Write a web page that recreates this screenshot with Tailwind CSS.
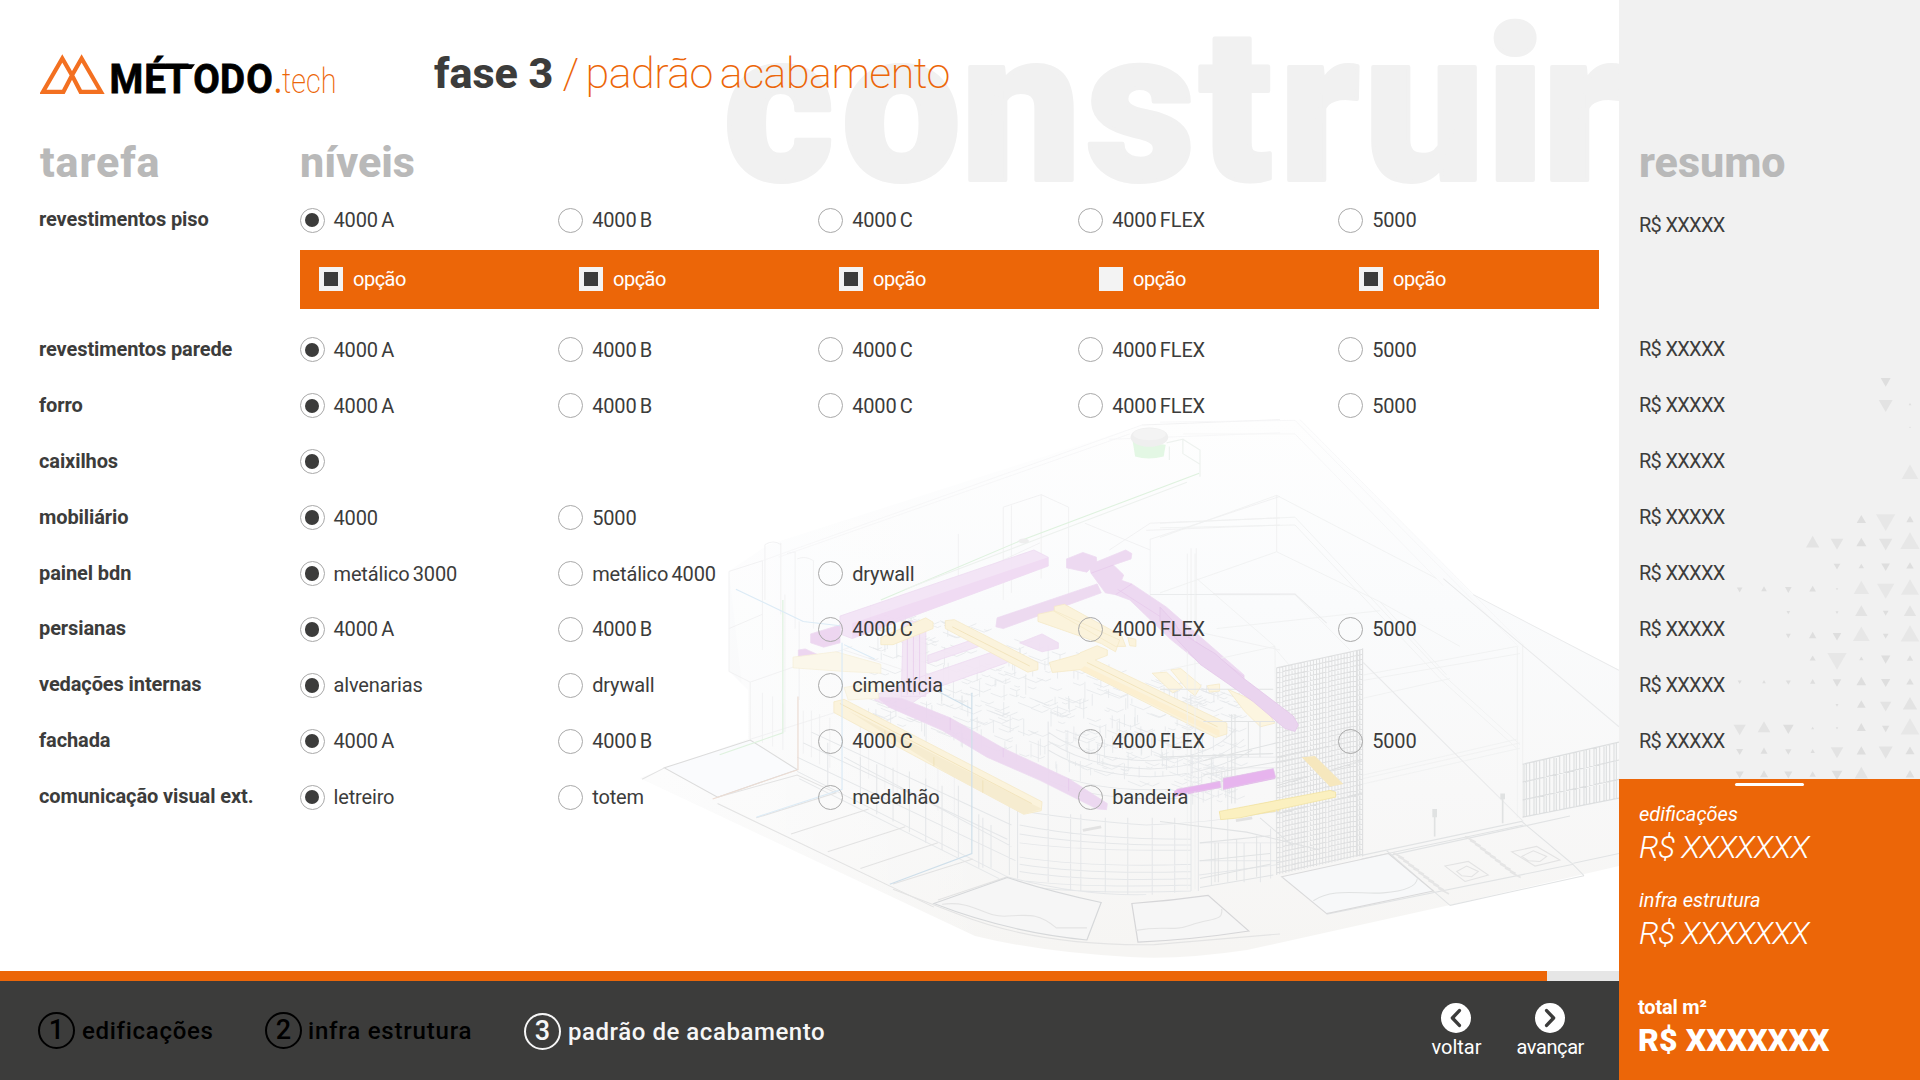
<!DOCTYPE html>
<html lang="pt-BR">
<head>
<meta charset="utf-8">
<title>Método.tech</title>
<script src="https://cdn.jsdelivr.net/npm/@tailwindcss/browser@4"></script>
</head>
<body class="bg-white">
<div class="relative flex h-[1080px] w-[1920px] overflow-hidden bg-white font-[Roboto,sans-serif] text-[20px] leading-none text-[#3c3c3b]">

  <main class="relative isolate flex w-[1619px] shrink-0 flex-col overflow-hidden">
    <!-- backdrop: section word and building model -->
    <svg class="absolute inset-0 -z-10" width="1619" height="1080" viewBox="0 0 1619 1080" fill="none">
      <defs>
        <linearGradient id="site" x1="0" y1="420" x2="0" y2="950" gradientUnits="userSpaceOnUse">
          <stop offset="0" stop-color="#fefefe"/><stop offset=".35" stop-color="#fafbfc"/><stop offset=".7" stop-color="#f8f8f8"/><stop offset="1" stop-color="#f6f5f3"/>
        </linearGradient>
        <linearGradient id="left" x1="640" y1="0" x2="1000" y2="0" gradientUnits="userSpaceOnUse">
          <stop offset="0" stop-color="#fff" stop-opacity=".6"/><stop offset="1" stop-color="#fff" stop-opacity="0"/>
        </linearGradient>
      </defs>
      <text y="179.5" font-size="213" font-weight="900" fill="#f1f1f1" stroke="#f1f1f1" stroke-width="4" stroke-linejoin="round" x="723.5 841.5 961 1086 1199 1279 1364 1486 1542">construir</text>

      <path fill="url(#site)" d="M729 571L768 545 1142 425 1300 420 1473 595 1619 670V866L1450 905 1247 950Q1180 960 1130 957 1040 952 975 936L640 778 748 739V690L729 671Z"/>
      <path fill="url(#left)" d="M729 571L768 545 1142 425V957Q1040 952 975 936L640 778 748 739Z"/>

      <g transform="translate(640 400) scale(.40816 .35714)">
        <g stroke="#eff0f1" stroke-width="2.2">
          <path d="M218 480V760L270 790V950M218 480L300 450 M1230 70L1568 55M300 450V700M218 640L300 600M306 405V560M345 400V600M306 405Q327 390 345 405M360 430L380 425V640M385 445Q405 435 425 450V640M270 790L520 690M890 300V560M910 295V540M983 265V500M1050 300V560M890 300L983 265 1050 300M780 375V520M530 640L980 400M1090 345L1250 420M1250 390V620L1568 700M1250 390L1568 270M1150 420L1250 345 1568 330M1568 350L1240 365M1350 415V640M1363 415V640"/>
          <path stroke="#f6f6f7" d="M300 450L1230 70M340 440L1200 95M1150 110L1568 92"/>
          <path d="M355 545V930M390 620V840M270 950L520 860M300 960V820M325 970V830M350 980V850M400 990V870M420 1000V870M440 1020V880M465 1030V890M500 700L760 800M540 1050V900M560 1060V910M600 1090V920M630 1100V930M700 1120V960M730 1150V1000M770 1170V1020"/>
        </g>
        <g stroke="#e5e7e9" stroke-width="2.6">
          <path d="M1250 545H1568"/>
          <path d="M385 1040L900 1335Q1080 1390 1240 1385M390 1060L880 1340M385 1000L920 1290M400 960L900 1230M420 930L910 1190M500 1000L910 1250M930 1150Q1100 1180 1240 1190 1400 1185 1568 1150M930 1190Q1100 1230 1350 1230M930 1215Q1100 1248 1350 1246M930 1240Q1100 1265 1350 1260M930 1280Q1100 1310 1350 1300M930 1300Q1100 1330 1350 1320M930 1320Q1100 1350 1350 1340M930 1345Q1100 1368 1350 1358M930 1360Q1100 1385 1350 1375M1000 930Q1100 1010 1250 1010 1400 1005 1460 920M1000 955Q1100 1030 1250 1033 1400 1028 1480 950M1000 980Q1100 1050 1250 1055 1400 1050 1500 980M1000 1040Q1120 1100 1300 1090M1000 1065Q1120 1125 1320 1115M1000 900V1350M905 1130V1330M925 1130V1340M1055 1160V1370M1080 1160V1375M1140 1170V1380M1195 1170V1385M1255 1170V1385M1310 1170V1380M1350 950V1375M1368 950V1375M1400 1000V1360M1440 1000V1350M1480 1240V1350M1520 1240V1350M1545 1200V1340M1370 1240H1568M1370 1290H1568M1370 1330L1568 1300M1380 1000H1568M1380 1030H1568M1400 1070L1568 1060"/>
          <path d="M830 1160V1310M840 1170V1310M860 1190V1310M780 1080V1280M740 1080V1260M700 1060V1240M660 1040V1210M620 1030V1180M580 1020V1160M540 1000V1130M460 960V1080"/>
        </g>
        <g id="clutter" stroke="#e5e7ea" stroke-width="2"></g>

        <g stroke="#e3e3e3" stroke-width="3">
          <path fill="#fafbfd" stroke="#dcdcdc" d="M60 1030L270 952 385 1035 190 1112Z"/>
          <path d="M5 1062L60 1030M190 1112L385 1050 480 1100 285 1170M370 1215L560 1145M460 1265L650 1195M540 1312L730 1240M620 1355L815 1285M730 1400L900 1335M190 1130L720 1420"/>
          <path fill="#f6f6f6" stroke="#d6d8da" d="M720 1410L900 1337Q1000 1375 1130 1407L1095 1512Q900 1490 720 1410Z"/>
          <path fill="#f6f6f6" stroke="#d6d6d8" d="M1205 1410Q1300 1402 1392 1387L1492 1487Q1350 1512 1220 1518Z"/>
          <path stroke="#e4e4e4" d="M740 1412C820 1400 840 1450 900 1445S980 1440 1020 1478H1095M1215 1485C1290 1470 1300 1490 1350 1470 1400 1450 1430 1460 1425 1425M620 1370L780 1440Q980 1530 1260 1525L1568 1495"/>
        </g>

        <g fill="#f3e4f6" stroke="#ecd8f0" stroke-width="2" opacity=".92">
          <path d="M490 605L965 420 1000 440V465L520 668 490 655Z"/>
          <path fill="#f0d9f3" stroke="none" d="M520 625L1000 440V465L520 668Z"/>
          <path fill="#ecd3f0" d="M418 655L490 630V680L450 692 418 680ZM388 700L405 697 445 718V738L425 740 388 720Z"/>
          <path d="M645 620H700V830H640ZM705 715L830 665V690L705 738ZM700 770L890 695 900 735 740 800 690 830 640 870 575 840 580 825Z" fill="#f3e6f5"/>
          <path fill="#ecd8f0" d="M875 610L1120 515 1130 540 890 640 872 635Z"/>
          <path fill="#ecd7f1" d="M1045 445L1085 427 1118 440 1120 462 1105 470 1095 482 1045 470ZM1100 462L1190 420 1205 430 1203 445 1160 462 1185 490 1180 505 1205 515 1290 580 1480 770V790L1568 860V895L1500 840 1440 780 1370 735 1300 670 1200 560 1165 545 1140 540 1105 485Z"/>
          <path fill="#ecd6f0" d="M580 832L640 835 760 890 890 975 1050 1060 1145 1130 1143 1147 1120 1145 980 1065 850 1000 740 925 610 860Z"/>
          <path fill="#f0dff3" d="M930 680L985 655 1025 680V695L985 705Z"/>
          <path fill="#e9b9f0" stroke="#e2b2ea" d="M1310 1095L1420 1068V1085L1310 1110ZM1430 1060L1550 1035 1555 1060 1430 1090Z"/>
        </g>
        <g stroke="#e4c5ea" stroke-width="1.6"><path d="M655 630V825M670 625V825M685 640V825M1170 530L1300 625 1480 775M1370 735V700M760 890V925M890 975V1000M1050 1060V1095M1165 545L1205 515M1105 485L1160 462"/></g>
        <g fill="#fbf3dc" stroke="#f5e9c6" stroke-width="2">
          <path d="M590 665L700 610 718 622V640L620 685H590ZM748 618L770 615 975 735V755L950 762 748 640Z"/>
          <path d="M975 600L1015 590 1175 672 1165 705 1130 682 975 620ZM1015 578L1040 572 1180 660 1190 690 1165 690 1015 592ZM1195 665L1215 670V690L1200 688Z"/>
          <path d="M1003 735L1075 712 1078 708 1120 688 1145 700V715L1115 728 1438 905V935L1410 945 1078 755 1010 763Z"/>
          <path fill="#fcefd0" stroke="none" d="M1090 745L1420 925V943L1078 755Z"/>
          <path d="M475 845L500 838 985 1125 983 1150 940 1160 760 1050 475 875Z"/>
          <path fill="#fbf7ea" stroke="#f6efd9" d="M375 720L480 705 590 740V765L500 760 375 750ZM500 805L580 790 585 835 510 840Z"/>
          <path fill="#f6ecd0" stroke="none" d="M510 870L985 1145 940 1160 760 1050Z"/>
          <path fill="#fcf5e0" d="M1255 765L1290 762 1330 805 1305 820ZM1300 755L1325 752 1375 800 1360 828 1340 810ZM1390 800L1420 795V815L1395 818ZM1440 810L1530 855 1555 905 1520 915 1480 870Z"/>
          <path fill="#fbf0c2" stroke="#f3e3a4" d="M1420 1155L1568 1120V1150L1430 1172Z"/>
          <path stroke="#efe0b4" fill="none" d="M490 850L960 1130M600 925V950M720 1000V1025M840 1065V1100M765 635L955 745M1095 735L1415 915"/>
        </g>
        <g stroke-width="3">
          <path stroke="#dff2df" d="M195 993L350 932V560M590 560L930 395 1370 205"/>
          <path stroke="#dcebf6" d="M235 530L400 620 490 632M495 680V1090L285 1168M500 685L575 725"/>
          <path stroke="#cfdfea" d="M813 820V1270L612 1356M720 810L813 865"/>
          <path stroke="#ecdcd3" d="M387 830V1035L178 1117"/>
          <path stroke="#eef2ef" d="M650 530L1340 230M1290 120L1330 110V150L1372 180M1330 110L1372 140V215M1297 130V168"/>
        </g>
        <path fill="#e3f7e4" d="M1207 115L1288 125 1283 158Q1245 170 1213 158Z"/>
        <ellipse cx="1248" cy="104" rx="46" ry="27" fill="#efefef"/>
        <ellipse cx="1248" cy="96" rx="40" ry="17" fill="#f4f4f4"/>
        <ellipse cx="940" cy="395" rx="13" ry="7" fill="#eee"/>
        <path d="M1085 1205L1130 1195M1460 1178L1500 1170" stroke="#e2e2e2" stroke-width="8"/>
      </g>

      <g transform="translate(1160 400) scale(.33333 .35714)">
        <g stroke="#eff0f1" stroke-width="2.4">
          <path stroke="#f5f5f6" d="M420 55L1090 685M0 62L405 57 1075 690M70 95H405L850 520"/>
          <path d="M0 385L350 267 830 500M350 267V425M0 540L350 425 660 565 900 690M0 345L405 328 850 770 1080 965M0 358L405 350 840 780 1070 975M660 565L860 770M610 770L1070 690M610 785L1080 710M610 835L870 780M610 1060L1080 960M610 1075L1080 975M610 1050L1070 950M82 430V1370M105 430V1370M110 500L345 690 350 1330M160 545H405L570 700M170 640L660 590M340 690L440 800M0 760L345 690"/>
          <path d="M1072 690V1170M1088 685V1170"/>
        </g>
        <g stroke="#e1e3e4" stroke-width="3">
          <path stroke="#e9eaeb" d="M610 735L1090 1180M850 500L1377 915M940 545L1377 757M160 543H405L500 625"/>
          <path d="M605 1275L1085 1180 1235 1297M605 1285L1090 1190"/>
          <path d="M690 1275L1230 1165M500 1440L1240 1300M520 1425L820 1372M870 1415L1272 1332M1240 1297L1377 1270M1235 1297L1272 1332M680 1262L870 1415"/>
          <path d="M0 810H340M0 1000L340 990M130 1010L350 960M130 1050L430 1000M130 900H345M215 880V1130M225 880V1130M265 900V1000M300 900V1000M120 1240L330 1220M120 1290L330 1270M120 1340L330 1300M120 1365L340 1330M165 1240V1350M175 1240V1350M230 1230V1345M290 1220V1335M0 1180L260 1210 480 1260M300 1170L400 1250"/>
        </g>
        <g id="tower" stroke="#dfe0e1" stroke-width="3"></g>
        <g id="fence" stroke="#dddfe0" stroke-width="3.4"></g>
        <path fill="#f7f8f9" stroke="#dadadb" stroke-width="3" d="M365 1335L685 1270 820 1375 500 1438Z"/>
        <path stroke="#e0e2e2" stroke-width="3" d="M460 1402C520 1365 600 1385 670 1380 740 1375 770 1360 772 1340"/>
        <g id="crossings" stroke="#e5e5e5"></g>
        <path stroke="#e3e3e3" stroke-width="3" d="M855 1305L925 1292 985 1330 915 1348ZM890 1320L920 1305 955 1320 935 1335 905 1332ZM1055 1265L1130 1250 1200 1288 1125 1305ZM1085 1278L1120 1262 1160 1278 1140 1292 1105 1290Z"/>
        <g stroke="#e0e2e2" stroke-width="5"><path d="M824 1160V1222M1028 1115V1185"/><path stroke-width="14" d="M824 1145V1168M1028 1102V1118"/></g>
        <g fill="#ead4ef" stroke="#e2c4e8" stroke-width="2">
          <path d="M0 580L45 625 60 650 120 685 165 710 245 775 400 885 415 910 405 928 375 920 280 845 205 795 120 740 0 620Z"/>
          <path fill="#e7b4ee" d="M190 1060L340 1032 347 1057 190 1090ZM50 1090L180 1068 183 1085 55 1103Z"/>
        </g>
        <g fill="#fbf0c0" stroke="#f1e09c" stroke-width="2">
          <path d="M178 1152L510 1093 527 1098V1112L240 1170 182 1175Z"/>
          <path fill="#f6e7bd" stroke="none" d="M425 1000L465 997 550 1075 510 1083Z"/>
        </g>
      </g>
    </svg>

    <header class="flex h-[130px] items-center pl-[40px] pt-[17px]">
      <svg class="-mt-[17px] shrink-0" width="394" height="130" viewBox="40 0 394 130" fill="none">
        <path d="M43 91.8L62.3 58.5 72 75.3 81.6 58.5 101 91.8H80.6L72 75.3 63.4 91.8Z" stroke="#f37021" stroke-width="4.2" stroke-miterlimit="8"/>
        <path d="M154 64.3H195L191.5 69H154Z" fill="#000"/>
        <text transform="scale(.94 1)" y="93.5" x="116.5 153.5 175.5 205.5 234 262" font-size="41" font-weight="700" fill="#000" stroke="#000" stroke-width=".8">MÉTODO</text>
        <text x="274" y="93" font-size="35" font-weight="200" fill="#ec6608" textLength="62.5" lengthAdjust="spacingAndGlyphs"><tspan font-weight="500">.</tspan>tech</text>
      </svg>
      <h1 class="flex whitespace-pre text-[43px]"><span class="w-[128.5px] font-extrabold tracking-[0px]">fase 3</span><span class="font-extralight tracking-[-0.5px] [word-spacing:-3px] text-[#ec6608]">/ padrão acabamento</span></h1>
    </header>

    <div class="flex h-[65px] items-center pl-[40px] text-[43px] font-extrabold text-[#b9b9b9]">
      <h2 class="w-[260px] tracking-[0.9px]">tarefa</h2>
      <h2>níveis</h2>
    </div>

    <section id="tasks"></section>

    <div class="mt-auto h-[10px] bg-[#e6e6e6]"><div class="h-full w-[1547px] bg-[#ec6608]"></div></div>
    <footer class="flex h-[99px] items-center bg-[#3c3c3b] text-[24px] font-medium">
      <nav class="flex grow text-black">
        <a class="flex w-[227px] items-center gap-[7px] pl-[38px] tracking-[0.7px]"><span class="flex size-[37px] items-center justify-center rounded-full border-2 border-black text-[27px] tracking-normal">1</span>edificações</a>
        <a class="flex w-[259px] items-center gap-[6px] pl-[38px] tracking-[0.8px]"><span class="flex size-[37px] items-center justify-center rounded-full border-2 border-black text-[27px] tracking-normal">2</span>infra estrutura</a>
        <a class="flex items-center gap-[7px] whitespace-nowrap pl-[38px] pt-[2px] tracking-[0.55px] text-[#f6f6f6]"><span class="flex size-[37px] items-center justify-center rounded-full border-2 border-[#f6f6f6] text-[27px] tracking-normal">3</span>padrão de acabamento</a>
      </nav>
      <div class="flex gap-[35px] pb-[1px] pr-[35px] text-[20px] font-normal text-white">
        <button class="flex flex-col items-center gap-[4px]">
          <svg width="30" height="30" viewBox="0 0 30 30"><circle cx="15" cy="15" r="15" fill="#fff"/><path d="M18.4 7.6L11.4 15l7 7.4" fill="none" stroke="#3c3c3b" stroke-width="3.4" stroke-linecap="round" stroke-linejoin="round"/></svg>voltar</button>
        <button class="flex flex-col items-center gap-[4px] tracking-[-0.4px]">
          <svg width="30" height="30" viewBox="0 0 30 30"><circle cx="15" cy="15" r="15" fill="#fff"/><path d="M11.6 7.6l7 7.4-7 7.4" fill="none" stroke="#3c3c3b" stroke-width="3.4" stroke-linecap="round" stroke-linejoin="round"/></svg>avançar</button>
      </div>
    </footer>
  </main>

  <aside class="relative isolate flex w-[301px] flex-col overflow-hidden bg-[#f1f1f1] pt-[130px]">
    <svg id="triangles" class="absolute left-0 top-0 -z-10" width="301" height="780" viewBox="0 0 301 780"></svg>
    <h2 class="flex h-[65px] items-center pl-[20px] text-[43px] font-extrabold text-[#b9b9b9]">resumo</h2>
    <div id="prices" class="tracking-[-0.7px]"></div>
    <div class="absolute inset-x-0 bottom-0 h-[301px] bg-[#ec6608] pl-[20px] pt-[21px] text-white">
      <div class="absolute left-[116px] top-[4px] h-[2.5px] w-[69px] rounded-full bg-white"></div>
      <p class="text-[20px] italic leading-[28px]">edificações</p>
      <p class="mb-[18px] text-[32px] font-light italic leading-[39px] pb-px tracking-[-0.8px]">R$ XXXXXXX</p>
      <p class="text-[20px] italic leading-[28px]">infra estrutura</p>
      <p class="mb-[39px] text-[32px] font-light italic leading-[39px] pb-px tracking-[-0.8px]">R$ XXXXXXX</p>
      <p class="-ml-px text-[20px] font-bold leading-[28px] tracking-[-0.2px]">total m²</p>
      <p class="-ml-px text-[32px] font-black leading-[38px] tracking-[0.1px]">R$ XXXXXXX</p>
    </div>
  </aside>
</div>

<script>
const levels = ['4000 A', '4000 B', '4000 C', '4000 FLEX', '5000'];
const tasks = [
  ['revestimentos piso', levels],
  ['revestimentos parede', levels],
  ['forro', levels],
  ['caixilhos', ['']],
  ['mobiliário', ['4000', '5000']],
  ['painel bdn', ['metálico 3000', 'metálico 4000', 'drywall']],
  ['persianas', levels],
  ['vedações internas', ['alvenarias', 'drywall', 'cimentícia']],
  ['fachada', levels],
  ['comunicação visual ext.', ['letreiro', 'totem', 'medalhão', 'bandeira']],
];
const radio = (label, on) => `<label class="flex items-center gap-[9px] whitespace-nowrap tracking-[-0.15px] [word-spacing:-1.5px]"><span class="flex size-[25px] shrink-0 items-center justify-center rounded-full border border-[#a9a9a9]">${on ? '<i class="size-[14.5px] rounded-full bg-[#3c3c3b]"></i>' : ''}</span>${label}</label>`;
const row = ([name, opts], height) => `<div class="grid grid-cols-[260.5px_258.7px_260px_260px_260px_1fr] items-center pl-[39px] ${height}"><b class="-mt-[2px] whitespace-nowrap font-bold tracking-[-0.1px]">${name}</b>${opts.map((o, i) => radio(o, i === 0)).join('')}</div>`;
const option = on => `<label class="flex items-center gap-[10px] tracking-[-0.5px]"><span class="flex size-[24px] items-center justify-center bg-[#f3f3f3]">${on ? '<i class="size-[14px] bg-[#3c3c3b]"></i>' : ''}</span><span class="pb-px">opção</span></label>`;
document.getElementById('tasks').innerHTML =
  row(tasks[0], 'h-[50px]') +
  `<div class="mt-[5px] mb-[13px] ml-[300px] grid h-[59px] w-[1299px] grid-cols-[260px_260px_260px_260px_1fr] items-center bg-[#ec6608] pb-px pl-[19px] text-white">${[1, 1, 1, 0, 1].map(option).join('')}</div>` +
  tasks.slice(1).map(t => row(t, 'h-[55.9px]')).join('');

const price = h => `<p class="flex items-center pl-[20px] ${h}">R$ XXXXX</p>`;
document.getElementById('prices').innerHTML = price('h-[60px] mb-[66.5px]') + price('h-[55.9px]').repeat(8);

/* triangle pattern: [column, centre y, width]; odd columns point up */
const tri = [[6,67,30],[6,138,42],[7,132,8],[7,202,5],[7,335,50],[5,477,28],[6,488,58],[7,477,22],[3,545,40],[4,553,38],[5,546,30],[6,554,40],[7,542,58],[4,620,20],[5,618,16],[6,622,26],[7,616,22],[0,690,17],[1,686,17],[2,690,20],[3,686,20],[4,688,7],[5,682,46],[6,694,52],[7,681,54],[2,758,11],[4,758,9],[5,752,37],[6,760,17],[7,752,37],[2,828,15],[3,825,22],[4,830,26],[5,821,50],[6,829,17],[7,820,56],[3,894,18],[4,904,58],[5,895,13],[6,899,28],[7,894,19],[0,967,12],[1,965,11],[2,968,15],[3,964,16],[4,969,26],[5,963,29],[6,969,28],[7,964,22],[4,1036,9],[5,1032,26],[6,1040,34],[7,1030,43],[0,1110,37],[1,1100,38],[2,1108,32],[3,1104,9],[4,1105,8],[5,1101,27],[6,1107,22],[7,1099,56],[0,1176,21],[1,1172,21],[2,1176,19],[3,1173,13],[4,1178,38],[5,1171,28],[6,1178,42],[7,1171,27],[0,1245,24],[1,1241,24],[2,1245,24],[3,1242,19],[4,1246,32],[5,1238,40],[7,1241,26]];
document.getElementById('triangles').innerHTML = tri.map(([c, y, w]) => {
  const x = 1 + (359 + c * 73) / 3, cy = 360 + y / 3, r = w / 6, h = w * .145 * (c % 2 ? 1 : -1);
  return `<path fill="${w > 44 ? '#e7e7e7' : w > 32 ? '#e3e3e3' : '#dedede'}" d="M${x - r} ${cy + h}H${x + r}L${x} ${cy - h}Z"/>`;
}).join('');

/* curtain-wall lattice of the tower */
let d = '';
for (let x = 350; x <= 608; x += 9.2) { const t = (x - 350) / 258; d += `M${x} ${750 - t * 52}V${1330 - t * 55}`; }
for (let k = 0; k < 42; k++) d += `M350 ${750 + k * 14}L608 ${698 + k * 14}`;
d += 'M600 698V1278M608 695V1278M592 700V1278M350 1000L608 950M350 1080L608 1010M350 1160L608 1100';
document.getElementById('tower').innerHTML = `<path d="${d}"/>`;

/* slatted fence at the back of the lot */
d = 'M1088 1020L1377 958M1088 1070L1377 1008M1088 1120L1377 1062M1088 1168L1377 1115';
for (let x = 1092, i = 0; x < 1377; x += 7 + (i++ % 3) * 3) { const t = (x - 1088) / 289; d += `M${x} ${1020 - t * 62}V${1168 - t * 53}`; }
document.getElementById('fence').innerHTML = `<path d="${d}"/>`;

/* pedestrian crossings */
d = '';
for (let i = 0; i < 10; i++) d += `M${700 + i * 15} ${1268 + i * 11}l32 16M${915 + i * 15} ${1222 + i * 11}l32 16`;
document.getElementById('crossings').innerHTML = `<path stroke-width="5" d="${d}"/>`;

/* furniture and framing inside the floor plan */
let s = 7; const rnd = () => (s = s * 16807 % 2147483647) / 2147483647;
d = '';
for (let i = 0; i < 520; i++) {
  const u = rnd(), v = rnd(), x = 560 + u * 900, y = 560 + u * 260 + v * 330, w = 8 + rnd() * 30;
  d += i % 3 ? `M${x | 0} ${y | 0}l${w | 0} ${w * .45 | 0}l${w * .6 | 0} ${-w * .3 | 0}` : `M${x | 0} ${y | 0}v${w * 1.6 | 0}`;
}
document.getElementById('clutter').innerHTML = `<path d="${d}"/>`;
</script>
</body>
</html>
